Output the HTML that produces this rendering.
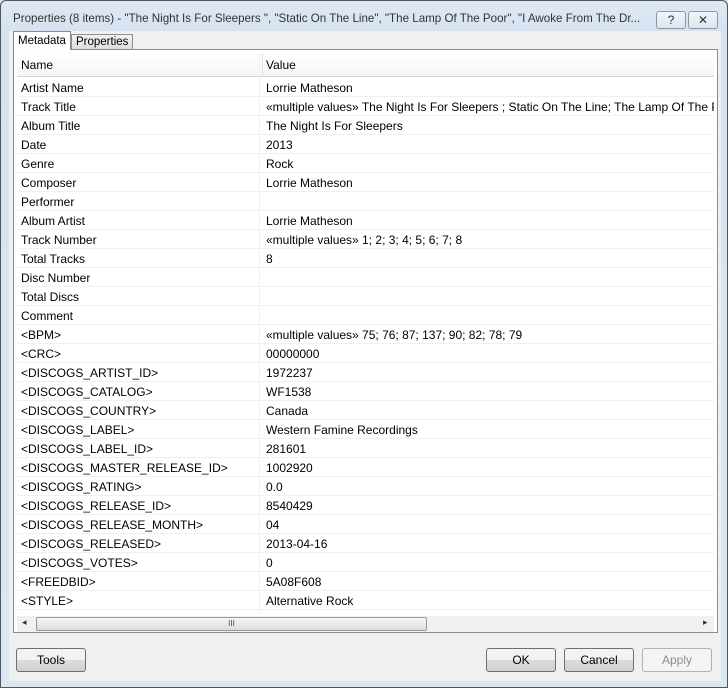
<!DOCTYPE html><html><head><style>
*{margin:0;padding:0;box-sizing:border-box}
body{width:728px;height:688px;background:#dbe6f4;font-family:"Liberation Sans",sans-serif;font-size:12px;color:#000;position:relative;overflow:hidden}
.win{position:absolute;left:0;top:0;width:728px;height:688px;border:1px solid #555;border-radius:6px 6px 0 0;background:linear-gradient(#dfe9f5,#d6e2f1 30px,#dbe6f4)}
.title{position:absolute;left:12px;top:11px;font-size:11.6px;color:#333;white-space:nowrap;width:640px;overflow:hidden}
.tb{position:absolute;top:10px;width:30px;height:18px;border:1px solid #8a96a6;border-radius:3px;background:linear-gradient(#f2f5fa,#dfe6ef);text-align:center;font-size:12px;color:#333;line-height:16px}
.body{position:absolute;left:8px;top:30px;width:712px;height:650px;background:#f0f0f0}
.tab{position:absolute;height:19px;border:1px solid #8e8f8f;border-bottom:none;padding:0 4px;line-height:18px;font-size:11.5px}
.panel{position:absolute;left:4px;top:18px;width:705px;height:584px;border:1px solid #898c95;background:#fff}
.hdr{position:absolute;left:3px;top:3px;width:697px;height:24px;background:linear-gradient(#fff,#f4f5f7);border-bottom:1px solid #d5d5d5}
.hdr span{position:absolute;top:5px}
.rows{position:absolute;left:3px;top:28px;width:697px}
.r{height:19px;border-bottom:1px solid #f0f0f0;position:relative;white-space:nowrap;overflow:hidden}
.r span{position:absolute;top:3px}
.a{left:4px}.b{left:249px}
.col{position:absolute;left:245px;top:3px;width:1px;height:560px;background:#eef2f8}
.sb{position:absolute;left:3px;top:566px;width:697px;height:16px;background:#f0f0f0}
.thumb{position:absolute;left:19px;top:1px;width:391px;height:14px;border:1px solid #989898;border-radius:2px;background:linear-gradient(#f6f6f6,#dcdcdc);text-align:center;font-size:8px;line-height:12px;color:#444}
.btn{position:absolute;top:617px;height:24px;border:1px solid #707070;border-radius:3px;background:linear-gradient(#f2f2f2 50%,#dddddd 50%,#cfcfcf);text-align:center;line-height:22px}
</style></head><body><div class="win">
<div class="title">Properties (8 items) - "The Night Is For Sleepers ", "Static On The Line", "The Lamp Of The Poor", "I Awoke From The Dr...</div>
<div class="tb" style="left:655px">?</div><div class="tb" style="left:687px">✕</div>
<div class="body">
<div class="tab" style="left:4px;top:0;height:19px;background:#fff;z-index:2;border-color:#898c95">Metadata</div>
<div class="tab" style="left:62px;top:3px;height:16px;line-height:14px;background:linear-gradient(#f2f2f2,#dcdcdc)">Properties</div>
<div class="panel">
<div class="hdr"><span style="left:4px">Name</span><span style="left:249px">Value</span><div style="position:absolute;left:245px;top:0;width:1px;height:24px;background:#e0e0e0"></div></div>
<div class="col"></div>
<div class="rows">
<div class="r"><span class="a">Artist Name</span><span class="b">Lorrie Matheson</span></div>
<div class="r"><span class="a">Track Title</span><span class="b">«multiple values» The Night Is For Sleepers ; Static On The Line; The Lamp Of The Poor; I Awoke</span></div>
<div class="r"><span class="a">Album Title</span><span class="b">The Night Is For Sleepers</span></div>
<div class="r"><span class="a">Date</span><span class="b">2013</span></div>
<div class="r"><span class="a">Genre</span><span class="b">Rock</span></div>
<div class="r"><span class="a">Composer</span><span class="b">Lorrie Matheson</span></div>
<div class="r"><span class="a">Performer</span></div>
<div class="r"><span class="a">Album Artist</span><span class="b">Lorrie Matheson</span></div>
<div class="r"><span class="a">Track Number</span><span class="b">«multiple values» 1; 2; 3; 4; 5; 6; 7; 8</span></div>
<div class="r"><span class="a">Total Tracks</span><span class="b">8</span></div>
<div class="r"><span class="a">Disc Number</span></div>
<div class="r"><span class="a">Total Discs</span></div>
<div class="r"><span class="a">Comment</span></div>
<div class="r"><span class="a">&lt;BPM&gt;</span><span class="b">«multiple values» 75; 76; 87; 137; 90; 82; 78; 79</span></div>
<div class="r"><span class="a">&lt;CRC&gt;</span><span class="b">00000000</span></div>
<div class="r"><span class="a">&lt;DISCOGS_ARTIST_ID&gt;</span><span class="b">1972237</span></div>
<div class="r"><span class="a">&lt;DISCOGS_CATALOG&gt;</span><span class="b">WF1538</span></div>
<div class="r"><span class="a">&lt;DISCOGS_COUNTRY&gt;</span><span class="b">Canada</span></div>
<div class="r"><span class="a">&lt;DISCOGS_LABEL&gt;</span><span class="b">Western Famine Recordings</span></div>
<div class="r"><span class="a">&lt;DISCOGS_LABEL_ID&gt;</span><span class="b">281601</span></div>
<div class="r"><span class="a">&lt;DISCOGS_MASTER_RELEASE_ID&gt;</span><span class="b">1002920</span></div>
<div class="r"><span class="a">&lt;DISCOGS_RATING&gt;</span><span class="b">0.0</span></div>
<div class="r"><span class="a">&lt;DISCOGS_RELEASE_ID&gt;</span><span class="b">8540429</span></div>
<div class="r"><span class="a">&lt;DISCOGS_RELEASE_MONTH&gt;</span><span class="b">04</span></div>
<div class="r"><span class="a">&lt;DISCOGS_RELEASED&gt;</span><span class="b">2013-04-16</span></div>
<div class="r"><span class="a">&lt;DISCOGS_VOTES&gt;</span><span class="b">0</span></div>
<div class="r"><span class="a">&lt;FREEDBID&gt;</span><span class="b">5A08F608</span></div>
<div class="r"><span class="a">&lt;STYLE&gt;</span><span class="b">Alternative Rock</span></div>
</div>
<div class="sb"><span style="position:absolute;left:5px;top:1px;font-size:9px;color:#333">◂</span><div class="thumb">III</div><span style="position:absolute;left:686px;top:1px;font-size:9px;color:#333">▸</span></div>
</div>
<div class="btn" style="left:7px;width:70px">Tools</div>
<div class="btn" style="left:477px;width:70px">OK</div>
<div class="btn" style="left:555px;width:70px">Cancel</div>
<div class="btn" style="left:633px;width:70px;border-color:#adb2b5;background:#f4f4f4;color:#8d8d8d">Apply</div>
</div></div></body></html>
